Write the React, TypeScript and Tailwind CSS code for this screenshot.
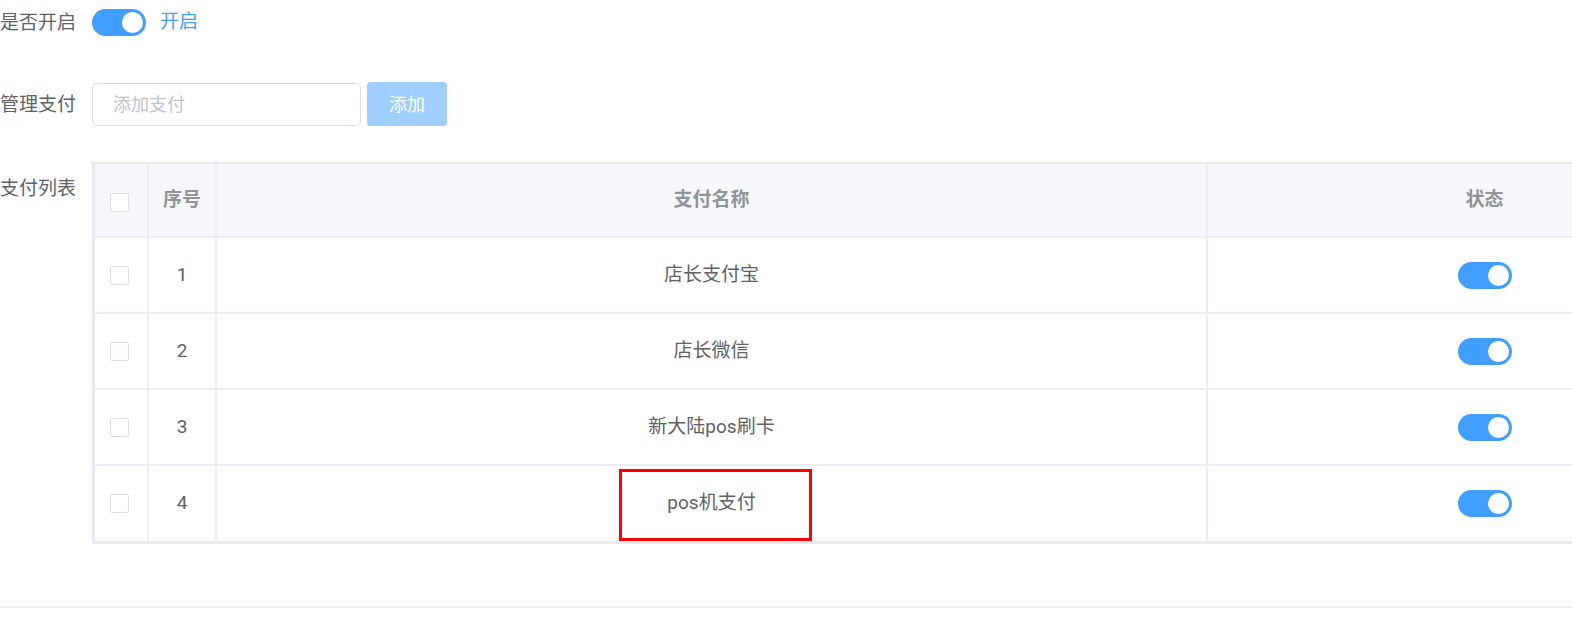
import { useState } from 'react'

interface PayItem { id: number; name: string; on: boolean }

const initial: PayItem[] = [
  { id: 1, name: '店长支付宝', on: true },
  { id: 2, name: '店长微信', on: true },
  { id: 3, name: '新大陆pos刷卡', on: true },
  { id: 4, name: 'pos机支付', on: true },
]

function Toggle({ on, onClick }: { on: boolean; onClick?: () => void }) {
  return (
    <button
      onClick={onClick}
      className={`relative inline-flex h-[27px] w-[54px] shrink-0 items-center rounded-full transition-colors ${
        on ? 'bg-[#409eff]' : 'bg-[#dcdfe6]'
      }`}
    >
      <span
        className={`absolute top-[3px] h-[21px] w-[21px] rounded-full bg-white transition-all ${
          on ? 'left-[30px]' : 'left-[3px]'
        }`}
      />
    </button>
  )
}

function Box() {
  return <span className="inline-block h-[19px] w-[19px] rounded-[2px] border border-[#dcdfe6] bg-white" />
}

export default function App() {
  const [enabled, setEnabled] = useState(true)
  const [items, setItems] = useState(initial)
  const [name, setName] = useState('')

  return (
    <div className="relative h-[622px] w-[1572px] overflow-hidden bg-white font-['Roboto','Noto_Sans_CJK_SC',sans-serif] text-[19px] text-[#606266]">
      {/* 是否开启 */}
      <div className="flex h-[44px] items-center pt-[1px]">
        <div className="w-[92px] shrink-0 leading-none">是否开启</div>
        <Toggle on={enabled} onClick={() => setEnabled(v => !v)} />
        <span className="ml-[14px] text-[#409eff]">开启</span>
      </div>

      {/* 管理支付 */}
      <div className="mt-[38px] flex items-center">
        <div className="w-[92px] shrink-0 leading-none">管理支付</div>
        <input
          value={name}
          onChange={e => setName(e.target.value)}
          placeholder="添加支付"
          className="h-[43px] w-[269px] rounded-[5px] border border-[#dcdfe6] px-[20px] text-[18px] outline-none placeholder:text-[#c0c4cc]"
        />
        <button
          disabled={!name}
          className="ml-[6px] h-[44px] w-[80px] rounded-[4px] bg-[#a0cfff] text-[18px] text-white"
        >
          添加
        </button>
      </div>

      {/* 支付列表 */}
      <div className="mt-[36px] flex items-start">
        <div className="w-[92px] shrink-0 pt-[17px] leading-none">支付列表</div>
        <div className="shrink-0 border-[3px] border-t-2 border-[#e9ebf0]">
          <table className="w-[1666px] table-fixed border-collapse">
            <colgroup>
              <col className="w-[53px]" />
              <col className="w-[68px]" />
              <col className="w-[991px]" />
              <col className="w-[554px]" />
            </colgroup>
            <thead>
              <tr className="h-[73px] bg-[#f5f7fa] font-bold text-[#909399]">
                <th className="border-r-2 border-b-2 border-[#ebeef5] pt-[5px] pr-[3px]"><div className="flex justify-center"><Box /></div></th>
                <th className="border-r-2 border-b-2 border-[#ebeef5]">序号</th>
                <th className="border-r-2 border-b-2 border-[#ebeef5]">支付名称</th>
                <th className="border-b-2 border-[#ebeef5]">状态</th>
              </tr>
            </thead>
            <tbody>
              {items.map((it, i) => (
                <tr key={it.id} className="h-[76px] text-center">
                  <td className={`border-r-2 border-[#ebeef5] pr-[3px] ${i < items.length - 1 ? 'border-b-2' : ''}`}>
                    <div className="flex justify-center"><Box /></div>
                  </td>
                  <td className={`border-r-2 border-[#ebeef5] ${i < items.length - 1 ? 'border-b-2' : ''}`}>{it.id}</td>
                  <td className={`border-r-2 border-[#ebeef5] ${i < items.length - 1 ? 'border-b-2' : ''}`}>{it.name}</td>
                  <td className={`border-[#ebeef5] ${i < items.length - 1 ? 'border-b-2' : ''}`}>
                    <div className="flex justify-center">
                      <Toggle
                        on={it.on}
                        onClick={() => setItems(list => list.map(x => (x.id === it.id ? { ...x, on: !x.on } : x)))}
                      />
                    </div>
                  </td>
                </tr>
              ))}
            </tbody>
          </table>
        </div>
      </div>

      <div className="mt-[62px] h-[2px] w-full bg-[#eef0f5]" />

      {/* annotation */}
      <div className="pointer-events-none absolute left-[619px] top-[469px] h-[72px] w-[193px] border-[3px] border-[#ff0000]" />
    </div>
  )
}
